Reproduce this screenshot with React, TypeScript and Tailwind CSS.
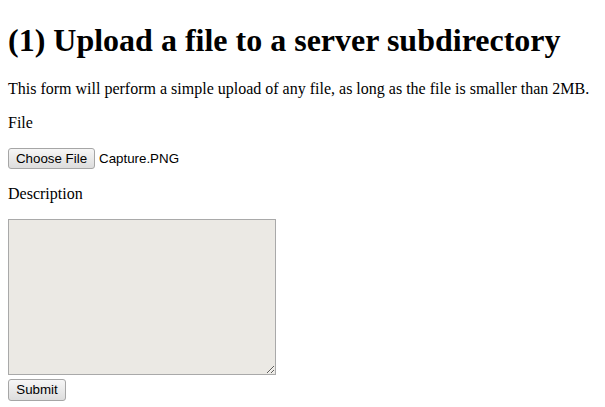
export default function App() {
  return (
    <div className="min-h-[407px] bg-white px-2 text-black [font-family:'Liberation_Serif','Times_New_Roman',serif]">
      <h1 className="pt-[22px] pb-[21px] text-[32px] font-bold leading-[37px]">
        (1) Upload a file to a server subdirectory
      </h1>
      <p className="text-[16px] leading-[18px]">
        This form will perform a simple upload of any file, as long as the file is smaller than 2MB.
      </p>
      <form className="flex flex-col items-start">
        <p className="mt-4 text-[16px] leading-[18px]">File</p>
        <div className="mt-4 flex items-center gap-[4px] text-[13.33px] [font-family:'Liberation_Sans',Arial,sans-serif]">
          <button
            type="button"
            className="h-[21px] w-[87px] rounded-[3px] border border-[#a6a6a6] bg-gradient-to-b from-[#f6f6f6] to-[#dddddd] leading-none text-black"
          >
            Choose File
          </button>
          <span>Capture.PNG</span>
        </div>
        <p className="mt-4 text-[16px] leading-[18px]">Description</p>
        <textarea
          className="mt-4 h-[156px] w-[268px] border border-[#a9a9a9] bg-[#ebe9e4] outline-none"
          readOnly
        />
        <button
          type="submit"
          className="mt-[4px] h-[22px] w-[58px] rounded-[3px] border border-[#a6a6a6] bg-gradient-to-b from-[#f6f6f6] to-[#dddddd] text-[13.33px] leading-none text-black [font-family:'Liberation_Sans',Arial,sans-serif]"
        >
          Submit
        </button>
      </form>
    </div>
  );
}
